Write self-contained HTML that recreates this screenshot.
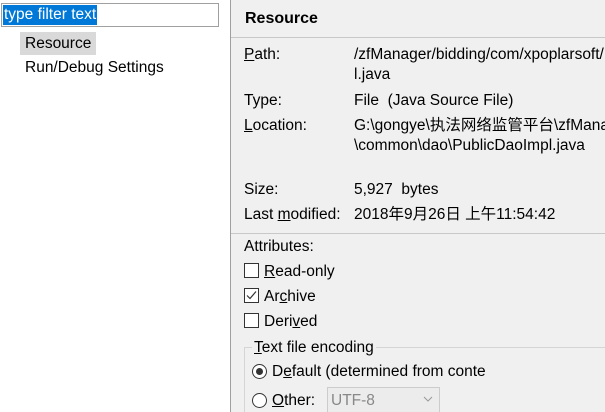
<html style="overflow:hidden;width:605px;height:412px"><head><style>
body{margin:0;width:605px;height:412px;overflow:hidden;background:#f0f0f0;font-family:"Liberation Sans","Noto Sans CJK SC",sans-serif;font-size:15.5px;color:#000;position:relative}
.a{position:absolute;white-space:nowrap;line-height:20px}
.left{position:absolute;left:0;top:0;width:230px;height:412px;background:#fff;border-right:1px solid #a0a0a0}
.cb{position:absolute;width:13px;height:13px;border:1px solid #333;background:#fff}
.rb{position:absolute;width:13px;height:13px;border:1px solid #333;border-radius:50%;background:#fff}
u{text-decoration:underline}
</style></head><body>
<div class="left">
<div style="position:absolute;left:1px;top:3px;width:216px;height:22px;border:1px solid #a0a0a0;background:#fff"></div>
<div class="a" style="left:3px;top:5px;background:#0078d7;color:#fff;padding:0 1px;line-height:20px">type filter text</div>
<div style="position:absolute;left:20px;top:32px;width:76px;height:23px;background:#d9d9d9"></div>
<div class="a" style="left:25px;top:34px">Resource</div>
<div class="a" style="left:25px;top:58px">Run/Debug Settings</div>
</div>
<div class="a" style="left:245px;top:9px;font-weight:bold;font-size:16px">Resource</div>
<div style="position:absolute;left:231px;top:37px;width:374px;height:1px;background:#c8c8c8"></div>
<div class="a" style="left:244px;top:45px"><u>P</u>ath:</div>
<div class="a" style="left:354px;top:45px">/zfManager/bidding/com/xpoplarsoft/</div>
<div class="a" style="left:354px;top:65px">l.java</div>
<div class="a" style="left:244px;top:91px">Type:</div>
<div class="a" style="left:354px;top:91px">File&nbsp; (Java Source File)</div>
<div class="a" style="left:244px;top:116px"><u>L</u>ocation:</div>
<div class="a" style="left:354px;top:116px">G:\gongye\执法网络监管平台\zfManager</div>
<div class="a" style="left:354px;top:136px">\common\dao\PublicDaoImpl.java</div>
<div class="a" style="left:244px;top:180px">Size:</div>
<div class="a" style="left:354px;top:180px">5,927&nbsp; bytes</div>
<div class="a" style="left:244px;top:205px">Last <u>m</u>odified:</div>
<div class="a" style="left:354px;top:205px">2018年9月26日 上午11:54:42</div>
<div style="position:absolute;left:231px;top:233px;width:374px;height:1px;background:#c8c8c8"></div>
<div class="a" style="left:244px;top:237px">Attributes:</div>
<div class="cb" style="left:244px;top:263px"></div><div class="a" style="left:264px;top:262px"><u>R</u>ead-only</div>
<div class="cb" style="left:244px;top:288px"><svg width="13" height="13" style="position:absolute;left:0;top:0"><path d="M2 6.5L5 9.5L11 2.5" stroke="#333" fill="none" stroke-width="1.2"/></svg></div><div class="a" style="left:264px;top:287px">Ar<u>c</u>hive</div>
<div class="cb" style="left:244px;top:313px"></div><div class="a" style="left:264px;top:312px">Deri<u>v</u>ed</div>
<div style="position:absolute;left:244px;top:347px;width:361px;height:65px;border:1px solid #d5d5d5;border-right:none;border-bottom:none"></div>
<div class="a" style="left:252px;top:338px;background:#f0f0f0;padding:0 2px"><u>T</u>ext file encoding</div>
<div class="rb" style="left:252px;top:364px"><div style="position:absolute;left:3px;top:3px;width:7px;height:7px;border-radius:50%;background:#333"></div></div>
<div class="a" style="left:272px;top:362px">D<u>e</u>fault (determined from conte</div>
<div class="rb" style="left:252px;top:393px"></div>
<div class="a" style="left:272px;top:391px"><u>O</u>ther:</div>
<div style="position:absolute;left:327px;top:387px;width:111px;height:25px;border:1px solid #ccc;border-bottom:none;background:#ececec"></div>
<div class="a" style="left:331px;top:391px;color:#888">UTF-8</div>
<svg style="position:absolute;left:423px;top:396px" width="10" height="6"><path d="M1 1L5 5L9 1" stroke="#999" fill="none"/></svg>
</body></html>
